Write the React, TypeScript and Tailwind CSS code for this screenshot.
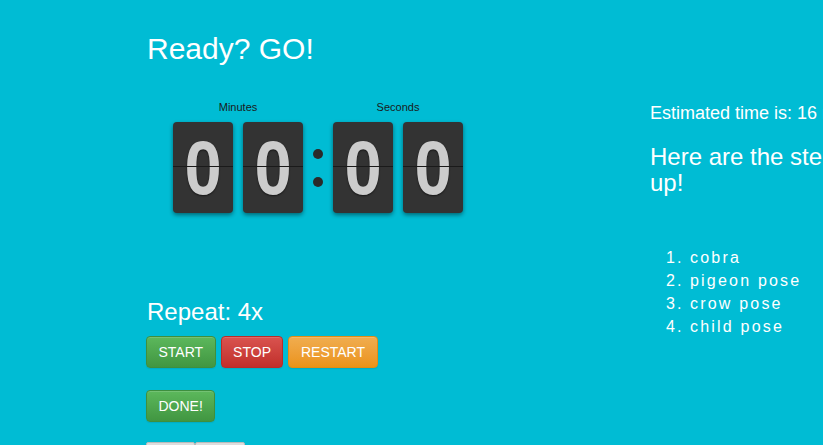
import React from "react";

const Digit = ({ value }: { value: string }) => (
  <div className="relative w-[60px] h-[91px] rounded-[4px] bg-[#333333] shadow-[0_2px_4px_rgba(0,0,0,0.45)] flex items-center justify-center overflow-hidden">
    <span className="text-[76px] leading-none font-bold text-[#cccccc] scale-x-[0.88] [text-shadow:0_1px_2px_rgba(0,0,0,0.6)]">
      {value}
    </span>
    <div className="absolute left-0 right-0 top-[44px] h-px bg-[#1a1a1a]" />
  </div>
);

const Btn = ({ label, tone }: { label: string; tone: "green" | "red" | "orange" }) => {
  const tones = {
    green: "bg-gradient-to-b from-[#5cb85c] to-[#419641] border-[#3e8f3e]",
    red: "bg-gradient-to-b from-[#d9534f] to-[#c12e2a] border-[#b92c28]",
    orange: "bg-gradient-to-b from-[#f0ad4e] to-[#eb9316] border-[#e38d13]",
  };
  return (
    <button
      className={`h-[32px] px-[11.5px] rounded-[4px] border text-white text-[14px] shadow-[inset_0_1px_0_rgba(255,255,255,0.15),0_1px_1px_rgba(0,0,0,0.08)] ${tones[tone]}`}
    >
      {label}
    </button>
  );
};

export default function App() {
  const steps = ["cobra", "pigeon pose", "crow pose", "child pose"];
  return (
    <div className="w-full h-[445px] overflow-hidden bg-[#00bcd4] font-['Liberation_Sans',Arial,sans-serif] text-white">
      <div className="flex pl-[146px] w-[1100px]">
        <div className="w-[504px] shrink-0">
          <h1 className="text-[30px] leading-none mt-[34px] ml-px">Ready? GO!</h1>

          <div className="flex mt-[38px] ml-[27px] items-start">
            <div className="flex flex-col items-center">
              <div className="text-[11px] text-[#1a1a1a] leading-none mb-[9px]">Minutes</div>
              <div className="flex gap-[10px]">
                <Digit value="0" />
                <Digit value="0" />
              </div>
            </div>
            <div className="w-[30px] h-[91px] mt-[20px] flex flex-col items-center justify-center gap-[18px]">
              <div className="w-[10px] h-[10px] rounded-full bg-[#2a2a2a]" />
              <div className="w-[10px] h-[10px] rounded-full bg-[#2a2a2a]" />
            </div>
            <div className="flex flex-col items-center">
              <div className="text-[11px] text-[#1a1a1a] leading-none mb-[9px]">Seconds</div>
              <div className="flex gap-[10px]">
                <Digit value="0" />
                <Digit value="0" />
              </div>
            </div>
          </div>

          <div className="text-[24px] leading-none mt-[87px] ml-px">Repeat: 4x</div>
          <div className="flex gap-[5px] mt-[12px]">
            <Btn label="START" tone="green" />
            <Btn label="STOP" tone="red" />
            <Btn label="RESTART" tone="orange" />
          </div>
          <div className="mt-[22px]">
            <Btn label="DONE!" tone="green" />
          </div>
          <div className="flex mt-[20px]">
            <div className="w-[49px] h-[8px] bg-[#dddddd] border border-[#bbbbbb] rounded-t-[2px]" />
            <div className="w-[50px] h-[8px] bg-[#dddddd] border border-[#bbbbbb] rounded-t-[2px]" />
          </div>
        </div>

        <div className="w-[310px] shrink-0">
          <div className="text-[18px] leading-none mt-[104px]">Estimated time is: 16 minutes</div>
          <h2 className="text-[24px] leading-[26px] mt-[22px]">Here are the steps to warm up!</h2>
          <ol className="mt-[50px] ml-[16px] text-[16px] leading-[23px] tracking-[2.2px]">
            {steps.map((s, i) => (
              <li key={s} className="flex">
                <span className="w-[24px]">{i + 1}.</span>
                <span>{s}</span>
              </li>
            ))}
          </ol>
        </div>
      </div>
    </div>
  );
}
